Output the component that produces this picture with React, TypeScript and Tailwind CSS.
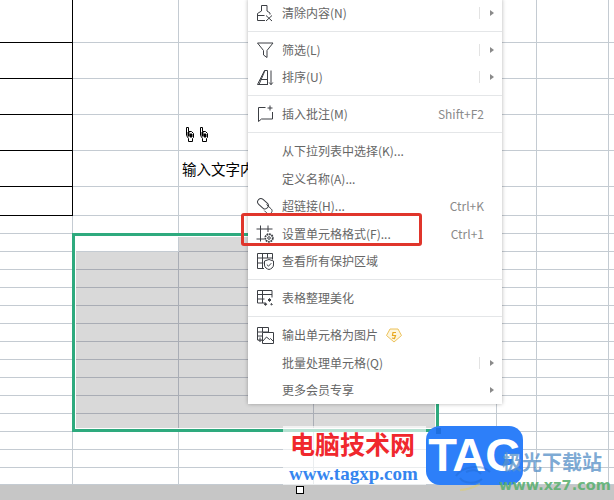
import type { ReactNode } from 'react';

const rowHeights = [
  'h-[43px]', 'h-[36px]', 'h-[36px]', 'h-[36px]', 'h-[36px]', 'h-[29px]', 'h-[18px]',
  'h-[18px]', 'h-[18px]', 'h-[18px]', 'h-[18px]', 'h-[18px]', 'h-[18px]', 'h-[18px]',
  'h-[18px]', 'h-[18px]', 'h-[18px]', 'h-[18px]', 'h-[18px]', 'h-[18px]', 'h-[17px]',
];

const cellClass = (row: number, col: number): string => {
  if (col === 0 && row <= 5) return 'border-r border-b border-black';
  const gray = row <= 17 && ((col === 1 && row >= 8) || ((col === 2 || col === 3) && row >= 7));
  const base = gray ? 'bg-[#d9d9d9] border-[#a9adb5]' : 'border-[#c4cbd2]';
  const noRight = col === 3 || col === 7;
  return `${base} border-b ${noRight ? '' : 'border-r'}`;
};

const Icon = ({ children }: { children: ReactNode }) => (
  <svg width="18" height="18" viewBox="0 0 18 18" fill="none" stroke="#3c3f44" strokeWidth="1" className="shrink-0">
    {children}
  </svg>
);

const icons: Record<string, ReactNode> = {
  clear: (
    <>
      <path d="M5.500 1.500h5.500v5.500l3 2v1.500M5.500 1.500V7l-4 2.500v7h7.500M1.500 11.500h7" />
      <path d="M10 11.500l6 5.500M16 11.500l-6 5.500" />
    </>
  ),
  filter: <path d="M1.500 2h15.500l-6 7.500v7l-3.500-2.500V9.500z" />,
  sort: (
    <>
      <path d="M1.500 16.500h10.500M11.500 2.500H8.500L1.500 16.500M9 2.500L3 16.500M11.500 2.500v14M4.500 11.500h7" />
      <path d="M15 2.500v14M13.200 14.500l1.800 2.200 1.800-2.200" />
    </>
  ),
  comment: (
    <>
      <path d="M9.500 2.500H2.500v14l3-2.500h11V7" />
      <path d="M14 .5v5M11.500 3h5" />
    </>
  ),
  link: (
    <>
      <rect x="1" y="3.500" width="12" height="6.500" rx="3.200" transform="rotate(42 7 6.700)" />
      <path d="M10.500 7.500l4.800 4.500c1.800 1.800.2 5-2.500 4.800-1 0-1.800-.5-2.500-1.200l-2-2" />
    </>
  ),
  format: (
    <>
      <path d="M4.500 .5v16M.5 4h16M.5 14h7.500M12 .5V7" />
      <circle cx="13" cy="13" r="3.800" strokeWidth="1.800" strokeDasharray="1.800 .7" />
      <circle cx="13" cy="13" r="1.300" />
    </>
  ),
  protect: (
    <>
      <path d="M8 16.500H1.500v-15h15v6M1.500 6h15M1.500 11h6M6.500 1.500v15M11.500 1.500V6" />
      <path d="M8.500 9l4.500-1.500 4.500 1.500v4c0 2.500-2.500 4-4.500 4.500-2-.5-4.500-2-4.500-4.500z" fill="#fff" />
      <path d="M10.800 12.500l1.700 1.700 2.800-3" />
    </>
  ),
  beautify: (
    <>
      <path d="M9.500 14H1.500V1.500h14.500v7M1.500 5.500h14.500M1.500 10h7M6.500 1.500V14" />
      <path d="M13.500 9.500l1.500 1.500-1.500 1.500-1.500-1.500zM9.500 14l1.200 1.200-1.200 1.200-1.200-1.200zM15.500 14.500l.8.8-.8.8-.8-.8z" fill="#3c3f44" />
    </>
  ),
  image: (
    <>
      <path d="M6 14H1.500V1.500h11V6M1.500 6h11M6.500 1.500V6M1.500 10H6" />
      <path d="M6.500 6.500h11v11h-11z" fill="#fff" />
      <path d="M6.500 15.500l4-4.500 3 2.500 1-1 3 3" />
      <path d="M4 11.500v4M2.500 14l1.500 1.500L5.500 14" />
    </>
  ),
};

type Item = {
  label: string;
  icon?: string;
  shortcut?: string;
  arrow?: 'split' | 'plain';
  vip?: boolean;
};

const groups: Item[][] = [
  [{ label: '清除内容(N)', icon: 'clear', arrow: 'split' }],
  [
    { label: '筛选(L)', icon: 'filter', arrow: 'split' },
    { label: '排序(U)', icon: 'sort', arrow: 'split' },
  ],
  [{ label: '插入批注(M)', icon: 'comment', shortcut: 'Shift+F2' }],
  [
    { label: '从下拉列表中选择(K)...' },
    { label: '定义名称(A)...' },
    { label: '超链接(H)...', icon: 'link', shortcut: 'Ctrl+K' },
    { label: '设置单元格格式(F)...', icon: 'format', shortcut: 'Ctrl+1' },
    { label: '查看所有保护区域', icon: 'protect' },
  ],
  [{ label: '表格整理美化', icon: 'beautify' }],
  [
    { label: '输出单元格为图片', icon: 'image', vip: true },
    { label: '批量处理单元格(Q)', arrow: 'split' },
    { label: '更多会员专享', arrow: 'plain' },
  ],
];

const MenuRow = ({ item }: { item: Item }) => (
  <div className="flex h-[27.5px] items-center pl-2 pr-[8px] text-[12px] text-[#666666]">
    <div className="w-[18px] shrink-0">{item.icon && <Icon>{icons[item.icon]}</Icon>}</div>
    <span className="ml-2 whitespace-nowrap">{item.label}</span>
    {item.vip && (
      <svg width="16" height="15" viewBox="0 0 16 15" fill="none" className="ml-2">
        <path d="M4 1h8l3.500 6.500L8 14 .5 7.500z" fill="#fdf6df" stroke="#ecc15a" />
        <path d="M10 4.500H7L6.500 7.500H9.500L8.500 10.500 6 10" stroke="#e8a820" strokeWidth="1.200" />
      </svg>
    )}
    <div className="flex-1" />
    {item.shortcut && <span className="mr-[10px] whitespace-nowrap text-[#8a8a8a]">{item.shortcut}</span>}
    {item.arrow && (
      <div className="flex items-center">
        <div className={item.arrow === 'split' ? 'h-3 w-px bg-[#e3e3e3]' : 'h-3 w-px'} />
        <div className="ml-[10px] h-0 w-0 border-y-[3px] border-l-[4px] border-y-transparent border-l-[#8a8a8a]" />
      </div>
    )}
  </div>
);

const Hand = () => (
  <svg width="9" height="15" viewBox="0 0 9 15" fill="none" stroke="#000" strokeWidth="1">
    <path d="M1.500 .5h2v4h3l2 2v4l-1 1v3h-4v-3l-2-3z" fill="#fff" />
    <path d="M3 5h1v4H3zM5 7h2v3H5z" fill="#000" />
  </svg>
);

export default function App() {
  return (
    <div className="relative h-[500px] w-[614px] overflow-hidden bg-white [font-family:'Noto_Sans_CJK_SC','Liberation_Sans',sans-serif]">
      {/* Sheet */}
      {rowHeights.map((h, r) => (
        <div key={r} className={`grid grid-cols-[73px_106px_135px_125px_58px_40px_72px_5px] ${h}`}>
          {Array.from({ length: 8 }).map((_, c) => (
            <div key={c} className={cellClass(r, c)}>
              {r === 3 && c === 2 && (
                <div className="flex gap-[5px] pl-[6px] pt-[12px]">
                  <Hand />
                  <Hand />
                </div>
              )}
              {r === 4 && c === 2 && (
                <div className="whitespace-nowrap pl-[3px] pt-[6px] text-[14.5px] leading-[24px] text-black">
                  输入文字内容
                </div>
              )}
            </div>
          ))}
        </div>
      ))}
      <div className="h-[15px] bg-[#c6c6c6] pl-[296px] pt-px">
        <div className="h-2 w-2 border border-black bg-white" />
      </div>

      {/* Selection */}
      <div className="absolute left-[72px] top-[233px] h-[199px] w-[367px] border-[3px] border-[#2eaa7e] shadow-[inset_0_0_0_1px_#ffffff]" />

      {/* Context menu */}
      <div className="absolute left-[248px] top-[-1px] w-[254px] bg-white shadow-[0_0_4px_rgba(0,0,0,0.3)]">
        {groups.map((group, i) => (
          <div key={i}>
            {i > 0 && (
              <div className="flex h-[9.5px] items-center">
                <div className="h-px w-full bg-[#e4e6e8]" />
              </div>
            )}
            {group.map((item) => (
              <MenuRow key={item.label} item={item} />
            ))}
          </div>
        ))}
      </div>

      {/* Red annotation */}
      <div className="absolute left-[241px] top-[213px] h-[33px] w-[181px] rounded-[3px] border-[3px] border-[#e0352b]" />

      {/* Watermark */}
      <div className="absolute left-[283px] top-[426px] h-[59px] w-[143px] bg-white/65" />
      <div className="absolute left-[290px] top-[427px] whitespace-nowrap text-[25px] font-bold leading-[32px] text-[#f0282d]">
        电脑技术网
      </div>
      <div className="absolute left-[289px] top-[462px] whitespace-nowrap text-[19px] font-bold leading-[24px] text-[#3585ef] [font-family:'Liberation_Serif',serif]">
        www.tagxp.com
      </div>
      <div className="absolute left-[426px] top-[426px] flex h-[59px] w-[97px] items-center justify-center rounded-[14px] bg-[#2d7ff9] pb-[3px] text-[47px] font-bold leading-none tracking-[-1px] text-white [font-family:'Liberation_Sans',sans-serif]">
        TAG
      </div>
      <div className="absolute left-[436px] top-[428px] h-[6px] w-[5px] bg-[#1f6fe0]" />
      <svg width="70" height="40" viewBox="0 0 70 40" fill="none" className="absolute left-[450px] top-[458px]">
        <path d="M6 18c6-10 26-12 34-4M10 20c4 6 16 6 22 1M16 14c6-3 12-2 15 2" stroke="#1e63c6" strokeWidth="2" opacity="0.35" />
        <path d="M10 32c6 0 12-2 20-6" stroke="#e6d04a" strokeWidth="2" opacity="0.4" />
      </svg>
      <div className="absolute left-[502px] top-[449px] whitespace-nowrap text-[20px] font-bold leading-[26px] text-[#5b93c9]/80">
        极光下载站
      </div>
      <div className="absolute left-[499px] top-[476px] whitespace-nowrap text-[14.5px] font-bold leading-[18px] text-[#5bb070]/90 [font-family:'DejaVu_Sans',sans-serif]">
        www.xz7.com
      </div>
    </div>
  );
}
